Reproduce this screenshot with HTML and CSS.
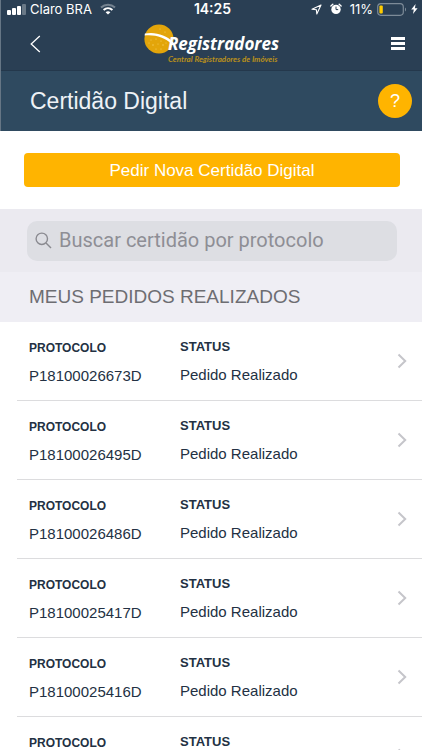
FILE: index.html
```html
<!DOCTYPE html>
<html lang="pt-BR">
<head>
    <meta charset="UTF-8">
    <meta name="viewport" content="width=device-width, initial-scale=1.0">
    <title>Certidão Digital</title>
    <link rel="stylesheet" href="styles.css">
</head>
<body>
    <header class="header">
        <div class="status-bar">
            <div class="status-left">
                <svg class="signal" width="19" height="11" viewBox="0 0 19 11" fill="#fff">
                    <rect x="0" y="6" width="4" height="5" rx="1"/>
                    <rect x="5" y="4" width="4" height="7" rx="1"/>
                    <rect x="10" y="2" width="4" height="9" rx="1"/>
                    <rect x="15" y="0" width="4" height="11" rx="1" opacity=".3"/>
                </svg>
                <span>Claro BRA</span>
                <svg class="wifi" width="16" height="12" viewBox="0 0 16 12" fill="none" stroke="#fff" stroke-width="2">
                    <path d="M1 4.5C5 .7 11 .7 15 4.5" opacity=".35"/>
                    <path d="M3.6 7.1c2.6-2.4 6.2-2.4 8.8 0"/>
                    <path d="M5.6 9.2c1.5-1.2 3.3-1.2 4.8 0L8 11.6z" fill="#fff" stroke="none"/>
                </svg>
            </div>
            <span class="clock">14:25</span>
            <div class="status-right">
                <svg width="11" height="11" viewBox="0 0 11 11" fill="none" stroke="#fff" stroke-width="1.1" stroke-linejoin="round">
                    <path d="M10 1 1 5.2l4.4.5.4 4.3z"/>
                </svg>
                <svg class="alarm" width="12" height="12" viewBox="0 0 12 12">
                    <circle cx="6" cy="6.4" r="4.7" fill="#fff"/>
                    <path d="M.9 3 2.800 1.300M11.100 3 9.200 1.300" stroke="#fff" stroke-width="1.4" stroke-linecap="round"/>
                    <path d="M6 3.6v3h2.2" fill="none" stroke="#2a3f54"/>
                </svg>
                <span>11%</span>
                <svg class="battery" width="30" height="13" viewBox="0 0 30 13">
                    <rect x=".7" y=".7" width="25.6" height="11.6" rx="3.2" fill="none" stroke="#7d8b98" stroke-width="1.2"/>
                    <path d="M28 4.5c1.4.7 1.4 3.3 0 4z" fill="#7d8b98"/>
                    <rect x="2.4" y="2.4" width="3.4" height="8.2" rx="1" fill="#fc0"/>
                </svg>
                <svg width="7" height="10" viewBox="0 0 7 10" fill="#fff">
                    <path d="M4.6 0 .2 5.6h2.6L2 10l4.6-5.8H3.9z"/>
                </svg>
            </div>
        </div>
        <nav class="navbar">
            <a class="back" href="#" aria-label="Voltar">
                <svg width="11" height="18" viewBox="0 0 11 18" fill="none" stroke="#fff" stroke-width="1.3">
                    <path d="M9.8 1 1.2 9l8.6 8"/>
                </svg>
            </a>
            <a class="brand" href="#">
                <svg class="brand-ball" width="30" height="30" viewBox="0 0 30 30">
                    <circle cx="15" cy="15" r="14.6" fill="#e3a50a"/>
                    <path d="M.9 9.6C11 7.4 22 11 29.4 18.2L28.4 20.5C20 12.8 11 10.4.6 11.4z" fill="#fff"/>
                    <g fill="#f7cf63">
                        <circle cx="7" cy="16" r=".5"/><circle cx="12" cy="15" r=".6"/><circle cx="17" cy="17" r=".6"/>
                        <circle cx="9" cy="21" r=".7"/><circle cx="14" cy="20" r=".5"/><circle cx="19" cy="21" r=".7"/>
                        <circle cx="12" cy="25" r=".6"/><circle cx="17" cy="25" r=".6"/><circle cx="22" cy="19" r=".5"/>
                        <circle cx="16" cy="5" r=".5"/><circle cx="21" cy="8" r=".6"/><circle cx="5" cy="19" r=".5"/>
                    </g>
                </svg>
                <span class="brand-text">
                    <span class="brand-name">Registradores</span>
                    <span class="brand-tagline">Central Registradores de Imóveis</span>
                </span>
            </a>
            <button class="menu" type="button" aria-label="Menu">
                <svg width="14" height="14" viewBox="0 0 14 14" fill="#fff">
                    <rect y="0" width="14" height="3"/>
                    <rect y="5" width="14" height="3"/>
                    <rect y="10" width="14" height="3"/>
                </svg>
            </button>
        </nav>
        <div class="title-bar">
            <h1>Certidão Digital</h1>
            <button class="help" type="button" aria-label="Ajuda">?</button>
        </div>
    </header>

    <main>
        <div class="actions">
            <button class="new-request" type="button">Pedir Nova Certidão Digital</button>
        </div>

        <form class="search">
            <label class="search-box">
                <svg width="17" height="17" viewBox="0 0 17 17" fill="none" stroke="#8a8a90" stroke-width="1.4">
                    <circle cx="6.8" cy="6.8" r="5.7"/>
                    <path d="m11 11 5 5"/>
                </svg>
                <input type="search" placeholder="Buscar certidão por protocolo" aria-label="Buscar certidão por protocolo">
            </label>
        </form>

        <h2 class="section-title">MEUS PEDIDOS REALIZADOS</h2>

        <ul class="orders">
            <li><a class="order" href="#">
                <span class="protocol"><b>PROTOCOLO</b><span>P18100026673D</span></span>
                <span class="status"><b>STATUS</b><span>Pedido Realizado</span></span>
                <svg class="chevron" width="10" height="16" viewBox="0 0 10 16"><path d="m1.5 1.5 6.7 6.5-6.7 6.5"/></svg>
            </a></li>
            <li><a class="order" href="#">
                <span class="protocol"><b>PROTOCOLO</b><span>P18100026495D</span></span>
                <span class="status"><b>STATUS</b><span>Pedido Realizado</span></span>
                <svg class="chevron" width="10" height="16" viewBox="0 0 10 16"><path d="m1.5 1.5 6.7 6.5-6.7 6.5"/></svg>
            </a></li>
            <li><a class="order" href="#">
                <span class="protocol"><b>PROTOCOLO</b><span>P18100026486D</span></span>
                <span class="status"><b>STATUS</b><span>Pedido Realizado</span></span>
                <svg class="chevron" width="10" height="16" viewBox="0 0 10 16"><path d="m1.5 1.5 6.7 6.5-6.7 6.5"/></svg>
            </a></li>
            <li><a class="order" href="#">
                <span class="protocol"><b>PROTOCOLO</b><span>P18100025417D</span></span>
                <span class="status"><b>STATUS</b><span>Pedido Realizado</span></span>
                <svg class="chevron" width="10" height="16" viewBox="0 0 10 16"><path d="m1.5 1.5 6.7 6.5-6.7 6.5"/></svg>
            </a></li>
            <li><a class="order" href="#">
                <span class="protocol"><b>PROTOCOLO</b><span>P18100025416D</span></span>
                <span class="status"><b>STATUS</b><span>Pedido Realizado</span></span>
                <svg class="chevron" width="10" height="16" viewBox="0 0 10 16"><path d="m1.5 1.5 6.7 6.5-6.7 6.5"/></svg>
            </a></li>
            <li><a class="order" href="#">
                <span class="protocol"><b>PROTOCOLO</b></span>
                <span class="status"><b>STATUS</b></span>
                <svg class="chevron" width="10" height="16" viewBox="0 0 10 16"><path d="m1.5 1.5 6.7 6.5-6.7 6.5"/></svg>
            </a></li>
        </ul>
    </main>
</body>
</html>
```

FILE: styles.css
```css
* {
    margin: 0;
    padding: 0;
    box-sizing: border-box;
}

html {
    scrollbar-width: none;
}

body {
    font-family: "Liberation Sans", Arial, sans-serif;
    background: #fff;
    color: #233143;
}

a {
    color: inherit;
    text-decoration: none;
}

button {
    border: 0;
    background: none;
    font: inherit;
    color: #fff;
}

svg {
    display: block;
    flex: none;
}

.header {
    background: #2a3f54;
    border-left: 1px solid #667685;
    color: #fff;
}

/* phone status bar */
.status-bar {
    display: grid;
    grid-template-columns: 1fr auto 1fr;
    align-items: center;
    height: 18px;
    padding: 0 4px 0 6px;
    font-family: Inter, "Liberation Sans", sans-serif;
    font-size: 13px;
    line-height: 18px;
}

.status-left,
.status-right {
    display: flex;
    align-items: center;
    gap: 4px;
}

.wifi {
    margin-left: 4px;
}

.status-right {
    justify-content: flex-end;
}

.alarm {
    margin: 0 4px;
}

.clock {
    font-size: 14px;
    font-weight: 600;
}

.navbar {
    display: grid;
    grid-template-columns: 1fr auto 1fr;
    align-items: center;
    height: 53px;
    padding: 0 17px;
    border-bottom: 1px solid #24384c;
}

.back {
    padding-left: 12px;
}

.brand {
    display: flex;
    align-items: flex-start;
}

.brand-text {
    display: flex;
    flex-direction: column;
    margin: 10px 0 0 -6px;
    font-style: italic;
    white-space: nowrap;
}

.brand-name {
    font-family: "Open Sans", "Noto Sans", sans-serif;
    font-size: 17px;
    line-height: 20px;
    font-weight: 700;
}

.brand-tagline {
    font-family: Lato, "Open Sans", sans-serif;
    font-size: 8px;
    line-height: 10px;
    font-weight: 700;
    color: #b98f1b;
}

.menu {
    justify-self: end;
}

.title-bar {
    display: flex;
    align-items: center;
    justify-content: space-between;
    height: 60px;
    padding: 0 10px 0 29px;
    background: #2f4a60;
}

.title-bar h1 {
    font-size: 23px;
    font-weight: 400;
    color: #eef2f6;
}

.help {
    width: 34px;
    height: 34px;
    border-radius: 50%;
    background: #ffb400;
    font-size: 18px;
}

.actions {
    padding: 22px 22px 22px 24px;
}

.new-request {
    width: 100%;
    height: 34px;
    padding-top: 2px;
    border-radius: 4px;
    background: #ffb400;
    font-size: 17px;
}

.search {
    padding: 12px 25px 11px 27px;
    background: #ebeaf0;
}

.search-box {
    display: flex;
    align-items: center;
    gap: 7px;
    height: 40px;
    padding: 0 8px 2px;
    border-radius: 10px;
    background: #dddee3;
}

.search-box input {
    flex: 1;
    min-width: 0;
    border: 0;
    outline: 0;
    background: none;
    font-family: Roboto, "Liberation Sans", sans-serif;
    font-size: 20px;
    color: #233143;
}

.search-box input::placeholder {
    color: #8e8e95;
}

.section-title {
    height: 50px;
    padding-left: 29px;
    background: #efeef4;
    font-size: 19px;
    font-weight: 400;
    line-height: 50px;
    color: #6d6d72;
}

.orders {
    list-style: none;
}

.orders li {
    padding-left: 17px;
}

.order {
    display: flex;
    align-items: flex-start;
    height: 79px;
    padding: 15px 15px 0 12px;
    border-bottom: 1px solid #dcdcde;
    font-size: 15px;
}

.protocol,
.status {
    display: flex;
    flex-direction: column;
    gap: 8px;
    line-height: 20px;
}

.protocol {
    width: 151px;
    padding-top: 1px;
}

.protocol b {
    font-size: 12px;
}

.status b {
    font-size: 13px;
}

.chevron {
    margin: 16px 0 0 auto;
    fill: none;
    stroke: #c5c5ca;
    stroke-width: 2;
}
```
